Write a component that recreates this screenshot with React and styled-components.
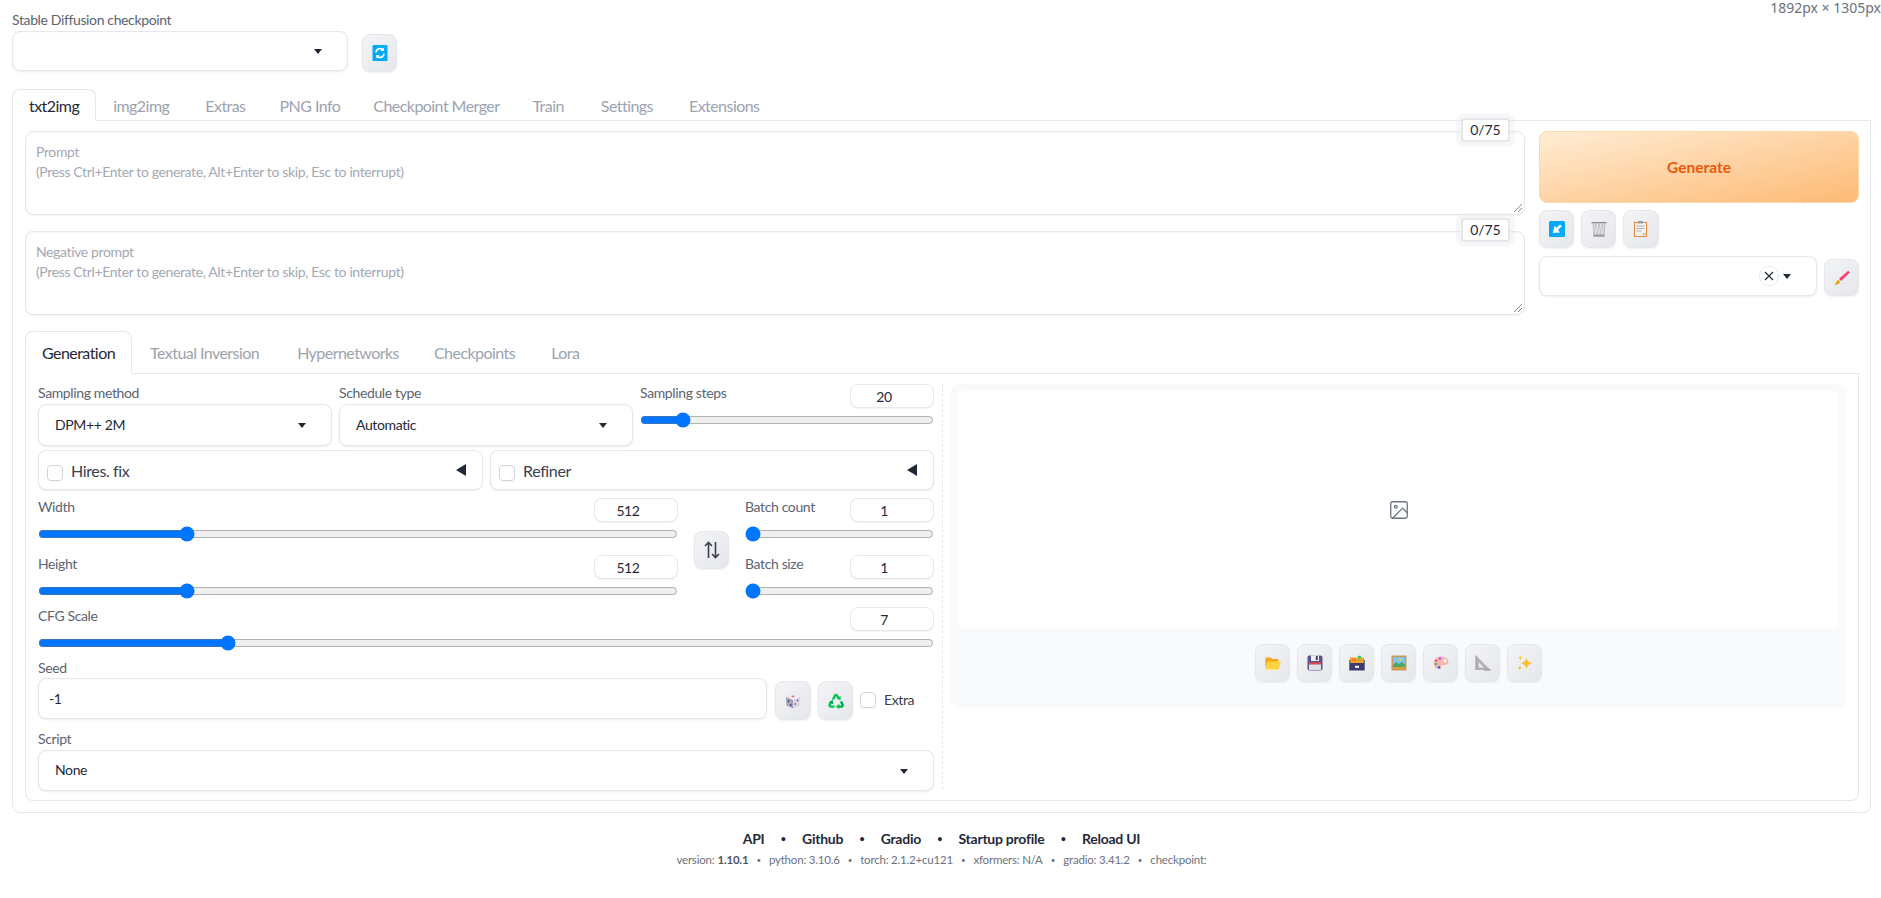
import React from "react";
import styled, { createGlobalStyle } from "styled-components";

const Global = createGlobalStyle`
  html, body { margin: 0; padding: 0; background: #fff; }
  body { font-family: Lato, "Noto Sans", sans-serif; font-size: 14px; color: #1f2937; letter-spacing: -0.37px; }
  * { box-sizing: border-box; }
`;

const Page = styled.div`
  position: relative;
  width: 1881px;
  padding: 10px 10px 0 12px;
`;
const SizeTip = styled.div`
  position: absolute; top: 0; right: 0; font-family: "Noto Sans", sans-serif;
  font-size: 14px; line-height: 16px; color: #6b7280; white-space: nowrap; letter-spacing: 0;
`;
const Label = styled.div`
  font-size: 14px; line-height: ${p => p.$lh || 20}px; height: ${p => p.$h || 21}px; color: #5b6472;
  margin-top: ${p => p.$mt || 0}px;
`;
const CheckpointRow = styled.div`display: flex; align-items: flex-start; gap: 14px;`;
const Select = styled.div`
  position: relative; display: flex; align-items: center; height: ${p => p.$h || 42}px; width: ${p => p.$w ? p.$w + "px" : "100%"};
  background: #fff; border: 1px solid #e5e7eb; border-radius: 8px; padding: 0 0 2px 16px;
  box-shadow: 0 1px 2px rgba(0,0,0,.08), inset 0 1px 2px rgba(0,0,0,.02);
  color: #1f2937; font-size: 14px;
`;
const Caret = styled.i`
  position: absolute; right: 25px; top: 50%; margin-top: -2px; width: 0; height: 0;
  border-left: 4px solid transparent; border-right: 4px solid transparent; border-top: 5px solid #1f2937;
`;
const ClearBtn = styled.span`
  position: absolute; right: 37px; top: 9px; width: 20px; height: 20px; border-radius: 50%;
  border: 1px solid #e5e7eb; display: flex; align-items: center; justify-content: center; background: #fff;
`;
const ToolBtn = styled.button`
  flex: none; display: flex; align-items: center; justify-content: center; padding: 0;
  width: ${p => p.$w || 35}px; height: ${p => p.$h || 38}px; margin-top: ${p => p.$mt || 0}px; margin-left: ${p => p.$ml || 0}px;
  border: 1px solid #e5e7eb; border-radius: 8px;
  background: linear-gradient(to bottom right, #f3f4f6, #e5e7eb);
  box-shadow: 0 1px 2px rgba(0,0,0,.06);
  align-self: ${p => p.$self || "auto"};
`;
const TabBar = styled.div`
  display: flex; height: ${p => p.$h}px; margin-top: ${p => p.$mt}px; border-bottom: 1px solid #e5e7eb;
  font-size: 16px; letter-spacing: -0.55px;
`;
const Tab = styled.div`
  height: ${p => p.$h}px; padding: 0 ${p => p.$pad}px; display: flex; align-items: center; white-space: nowrap;
  color: ${p => p.$active ? "#1f2937" : "#9ca3af"}; 
  border: 1px solid ${p => p.$active ? "#e5e7eb" : "transparent"};
  border-bottom: ${p => p.$active ? "1px solid #fff" : "none"};
  border-radius: 8px 8px 0 0; background: ${p => p.$active ? "#fff" : "transparent"};
  margin-right: ${p => p.$mr || 0}px;
`;
const MainPanel = styled.div`
  border: 1px solid #e5e7eb; border-top: none; border-radius: 0 0 8px 8px; padding: 10px 11px 10px 12px; height: 692px;
`;
const PromptGrid = styled.div`display: grid; grid-template-columns: 1500px 320px; column-gap: 14px;`;
const PromptCol = styled.div`display: flex; flex-direction: column; gap: 16px;`;
const PromptBox = styled.div`
  position: relative; height: 84px; padding: 10px 10px; border: 1px solid #e5e7eb; border-radius: 8px; background: #fff;
  box-shadow: inset 0 1px 2px rgba(0,0,0,.04), 0 1px 1px rgba(0,0,0,.04);
  color: #a3a9b4; font-size: 14px; line-height: 20px;
`;
const Counter = styled.div`
  position: absolute; top: -14px; right: 14px; width: 49px; height: 24px; background: #fff;
  border: 2px solid #e5e7eb; border-radius: 4px; box-shadow: 0 0 0 5px rgba(229,231,235,.35);
  display: flex; align-items: center; justify-content: center; color: #1f2937; font-size: 14px; letter-spacing: -0.1px;
`;
const Grip = styled.svg`position: absolute; right: 1px; bottom: 1px;`;
const SideCol = styled.div`display: flex; flex-direction: column;`;
const GenerateBtn = styled.button`
  height: 72px; width: 320px; border: 1px solid #fed7aa; border-radius: 8px; font: 700 15.5px Lato, sans-serif;
  color: #ea580c; background: linear-gradient(to bottom right, #ffedd5, #fdba74); letter-spacing: 0;
`;
const ToolRow = styled.div`display: flex; gap: 7px; margin-top: ${p => p.$mt || 0}px;`;
const SubPanel = styled.div`
  display: grid; grid-template-columns: 896px 912px; height: 427px;
  border: 1px solid #e5e7eb; border-top: none; border-radius: 0 0 8px 8px; padding: 10px 12px 0 12px;
`;
const LeftCol = styled.div`display: flex; flex-direction: column;`;
const RightCol = styled.div`
  margin: 0 0 0 8px; padding-left: 8px; border-left: 1px dashed #e5e7eb; height: 405px;
`;
const ThreeCols = styled.div`display: grid; grid-template-columns: 294px 294px 294px; column-gap: 7px;`;
const TwoCols = styled.div`display: grid; grid-template-columns: 445px 444px; column-gap: 7px; margin-top: 4px;`;
const Accordion = styled.div`
  position: relative; height: 40px; display: flex; align-items: center; padding-left: 8px;
  background: #fff; border: 1px solid #e5e7eb; border-radius: 8px; box-shadow: 0 1px 2px rgba(0,0,0,.08);
  font-size: 16px; color: #374151;
`;
const Check = styled.input.attrs({ type: "checkbox" })`
  appearance: none; flex: none; width: 16px; height: 16px; margin: ${p => p.$mt || 0}px 8px 0 0; background: #fff;
  border: 1px solid #d1d5db; border-radius: 4px; box-shadow: 0 1px 1px rgba(0,0,0,.04);
`;
const LeftTri = styled.i`
  position: absolute; right: 16px; top: 13px; width: 0; height: 0;
  border-top: 6px solid transparent; border-bottom: 6px solid transparent; border-right: 10px solid #1f2937;
`;
const SliderBlock = styled.div`height: 47px; margin-top: ${p => p.$mt || 0}px;`;
const SliderHead = styled.div`display: flex; justify-content: space-between; height: 24px;`;
const SliderLabel = styled.div`font-size: 14px; line-height: 18px; color: #5b6472;`;
const NumBox = styled.div`
  width: 84px; height: 24px; padding-right: 16px; display: flex; align-items: center; justify-content: center;
  background: #fff; border: 1px solid #e5e7eb; border-radius: 8px; font-size: 14px; color: #1f2937;
  box-shadow: 0 1px 1px rgba(0,0,0,.05);
`;
const Range = styled.input.attrs({ type: "range" })`
  display: block; width: 100%; height: 16px; margin: 4px 0 0; accent-color: #0075ff;
`;
const DimGrid = styled.div`
  display: grid; grid-template-columns: 640px 35px 189px; column-gap: 16px; margin-top: 8px;
`;
const SliderStack = styled.div`display: flex; flex-direction: column; gap: 10px;`;
const SeedRow = styled.div`display: flex; align-items: flex-start;`;
const SeedInput = styled.div`
  width: 729px; height: 41px; padding-left: 10px; display: flex; align-items: center; margin-right: 8px;
  background: #fff; border: 1px solid #e5e7eb; border-radius: 8px; font-size: 14px; color: #1f2937;
  box-shadow: 0 1px 2px rgba(0,0,0,.08), inset 0 1px 2px rgba(0,0,0,.03);
`;
const ExtraLabel = styled.label`display: flex; align-items: center; height: 41px; margin: 1px 0 0 7px; font-size: 14px; color: #374151;`;
const Gallery = styled.div`
  width: 895px; height: 324px; padding: 7px 7px 0; background: #f9fafb; border-radius: 8px;
`;
const ImageArea = styled.div`
  height: 237px; background: #fff; border-radius: 4px; display: flex; align-items: center; justify-content: center; color: #6b7280;
`;
const GalleryTools = styled.div`display: flex; justify-content: center; gap: 7px; margin-top: 16px;`;
const Footer = styled.div`
  padding: 16px 0 0 0; text-align: center;
`;
const Links = styled.div`
  display: flex; justify-content: center; align-items: center; font-size: 14px; font-weight: 700; line-height: 20px; color: #1f2937; letter-spacing: -0.25px;
`;
const LinkDot = styled.span`width: 37.5px; text-align: center; font-size: 9px;`;
const Versions = styled.div`
  display: flex; justify-content: center; align-items: center; font-size: 11.5px; line-height: 22px; color: #6b7280; letter-spacing: -0.2px;
  b { color: #4b5563; font-weight: 700; margin-left: 3px; }
`;
const VerDot = styled.span`width: 20.5px; text-align: center; font-size: 8px;`;

/* ---- emoji-like drawings ---- */
const Svg = ({ w = 16, h = 16, children }) => (
  <svg width={w} height={h} viewBox="0 0 16 16" fill="none" aria-hidden="true">{children}</svg>
);
const RefreshIcon = () => (
  <Svg>
    <rect x="0.5" y="0" width="15" height="16" rx="1" fill="#03a9f4" />
    <path d="M4 7.5a4 4 0 0 1 6.6-3" stroke="#fff" strokeWidth="1.7" />
    <path d="M12 8.5a4 4 0 0 1-6.6 3" stroke="#fff" strokeWidth="1.7" />
    <path d="M11.8 2.4v3.6H8.2zM4.2 13.6V10h3.6z" fill="#fff" />
  </Svg>
);
const ArrowInIcon = () => (
  <Svg>
    <rect width="16" height="16" rx="1.5" fill="#03a9f4" />
    <path d="M12.8 5.200 L11 3.400 L7.600 6.800 L5.600 4.800 L3.800 12 L11 11.400 L9 9z" fill="#fff" />
  </Svg>
);
const TrashIcon = () => (
  <Svg>
    <path d="M0.5 1h15v1.400h-15z" fill="#8a8a8a" />
    <path d="M1.500 2.400h13l-1 13.100h-11z" fill="#c4c4c4" />
    <path d="M3 3 5 14M6 3l2 11M9.500 3l2 11M13 3 10.500 14M10 3 7.500 14M6.500 3 4.500 14" stroke="#ececec" strokeWidth=".7" />
    <path d="M2.400 13.600h11.200l-.2 2.200H2.600z" fill="#a0a0a0" />
  </Svg>
);
const ClipIcon = () => (
  <Svg w={16} h={18}>
    <rect x="1.500" y="1.500" width="12" height="14" fill="#f3f4f6" stroke="#e08a3c" strokeWidth="1" />
    <rect x="5" y="0" width="5" height="2.500" fill="#9e9e9e" />
    <path d="M3.500 5h8M3.500 7.500h8M3.500 10h5" stroke="#a8a8a8" strokeWidth=".9" />
    <path d="M10 15.500l3.500-3.500H10z" fill="#e0b48c" />
  </Svg>
);
const BrushIcon = () => (
  <Svg>
    <path d="M14.200.8 15.800 2.400 7.200 11 5 8.800z" fill="#f43f6e" />
    <path d="M4.300 9.800 6.200 11.700C5.400 13.800 3 14.800.5 14.800 1.800 13.600 2.400 11 4.300 9.800z" fill="#f59e0b" />
  </Svg>
);
const FolderIcon = () => (
  <Svg>
    <path d="M.5 2.500h5.500l1.300 1.500h6.200v3H.5z" fill="#f6a623" />
    <path d="M.5 3v11L3 6.500h-1z" fill="#f6a623" />
    <path d="M3.200 6.500H16l-2.400 8H.8z" fill="#ffd23f" />
  </Svg>
);
const FloppyIcon = () => (
  <Svg>
    <rect x="0.500" y="0.500" width="15" height="15" rx="2" fill="#5b5391" />
    <rect x="4" y="0.500" width="8" height="5.500" fill="#efeff4" />
    <rect x="8.800" y="1.100" width="2" height="4" fill="#3f3a70" />
    <rect x="2" y="7.500" width="12" height="2" fill="#ef4444" />
    <rect x="2" y="9.500" width="12" height="5.500" fill="#dfe0e6" />
  </Svg>
);
const CardBoxIcon = () => (
  <Svg>
    <rect x="1" y="2.500" width="14" height="6" fill="#f6a623" />
    <rect x="9" y="0.800" width="3" height="2" fill="#22c55e" />
    <rect x="3" y="3.900" width="4" height="2" fill="#ef7a3c" />
    <rect x="9" y="3.800" width="3" height="1.500" fill="#7fb069" />
    <path d="M.3 5h1v3h13.400V5h1v10.500H.3z" fill="#3f3a70" />
    <rect x="6" y="10.800" width="4" height="2" fill="#fff" />
  </Svg>
);
const PictureIcon = () => (
  <Svg>
    <rect x=".5" y=".5" width="15" height="15" fill="#c9985a" />
    <rect x="2" y="2" width="12" height="12" fill="#7fc6ea" />
    <path d="M2 10l3-3 3 2 3-2 3 2.500V14H2z" fill="#4fa36b" />
    <path d="M2 12h12v2H2z" fill="#d8a13a" />
    <circle cx="9.300" cy="4.700" r="1.400" fill="#f7c948" />
  </Svg>
);
const PaletteIcon = () => (
  <Svg>
    <path d="M7.500 1.500C3.500 1.500.5 4.500.5 8.300c0 3.600 3 6.200 6 6.200 1.400 0 2-1 1.700-2-.4-1.400.3-2.600 1.700-2.400 2.400.3 5.600-.4 5.600-3.400C15.500 3.700 12 1.500 7.500 1.500z" fill="#f6b8ac" />
    <circle cx="12" cy="6" r="1.400" fill="#fff" />
    <circle cx="7" cy="3.500" r="1.200" fill="#a855f7" />
    <circle cx="3.300" cy="5.600" r="1.200" fill="#ec4899" />
    <circle cx="3" cy="9" r="1.200" fill="#22c55e" />
    <circle cx="6" cy="12.300" r="1.200" fill="#2563eb" />
  </Svg>
);
const RulerIcon = () => (
  <Svg>
    <path fillRule="evenodd" d="M1 .5 15.500 15H1zM3.600 7.200V12.400H8.800z" fill="#b3b3b3" />
    <path d="M1 .5 1 15" stroke="#9a9a9a" strokeWidth="1" />
    <path d="M15.500 15H9" stroke="#8f87b8" strokeWidth="1" />
  </Svg>
);
const SparkleIcon = () => (
  <Svg>
    <path d="M9.500 2.500C10.300 6.200 11.500 7.300 15.500 8.200 11.500 9.200 10.300 10.300 9.500 14 8.700 10.300 7.500 9.200 3.800 8.200 7.500 7.300 8.700 6.200 9.500 2.500z" fill="#fbbf24" />
    <path d="M3.300.5c.3 1.500.8 2 2.300 2.300-1.500.3-2 .8-2.300 2.300C3 3.600 2.500 3.100 1 2.800 2.500 2.500 3 2 3.300.5z" fill="#fbbf24" />
    <path d="M2.800 10.500c.3 1.500.8 2 2.300 2.300-1.500.3-2 .8-2.300 2.300-.3-1.500-.8-2-2.300-2.300 1.500-.3 2-.8 2.300-2.300z" fill="#fbbf24" />
  </Svg>
);
const DiceIcon = () => (
  <Svg>
    <path d="M8 .8 15 4 8 7 1 4z" fill="#efeaf3" />
    <path d="M1 4 8 7v8.500L1.500 12.500z" fill="#a79fb8" />
    <path d="M15 4 8 7v8.500l6.500-3z" fill="#d9d3e4" />
    <ellipse cx="8" cy="3.300" rx="1.500" ry=".9" fill="#f0657a" />
    <circle cx="3.500" cy="8" r=".9" fill="#4a4470" />
    <circle cx="5.800" cy="12" r=".9" fill="#4a4470" />
    <circle cx="12.500" cy="7.500" r=".8" fill="#4a4470" />
    <circle cx="10.300" cy="11" r=".8" fill="#4a4470" />
  </Svg>
);
const RecycleIcon = () => (
  <Svg>
    <path d="M5 6.500 7 2.500c.5-.9 1.500-.9 2 0l1.500 2.600" stroke="#00c853" strokeWidth="2.400" fill="none" />
    <path d="M12.700 2.900 12.500 7.500 8.600 5.300z" fill="#00c853" />
    <path d="M13 8.500l1.600 3.100c.4 1-.2 2-1.200 2H11" stroke="#00a651" strokeWidth="2.400" fill="none" />
    <path d="M11.300 10.900v5L7.600 13.400z" fill="#00c853" />
    <path d="M6.500 13.600H3c-1.200 0-1.900-1-1.300-2.100l1.400-2.500" stroke="#00c853" strokeWidth="2.400" fill="none" />
    <path d="M.7 9.200 4.800 6.800 5.200 11.200z" fill="#00a651" />
  </Svg>
);
const SwapIcon = () => (
  <svg width="16" height="18" viewBox="0 0 16 18" fill="none" stroke="#374151" strokeWidth="1.600" aria-hidden="true">
    <path d="M4.500 17V1.500M1 5l3.500-3.500L8 5M11.500 1v15.500M8 13l3.500 3.500L15 13" />
  </svg>
);
const ImageIcon = () => (
  <svg width="22" height="22" viewBox="0 0 24 24" fill="none" stroke="currentColor" strokeWidth="1.400" aria-hidden="true" strokeLinecap="round" strokeLinejoin="round">
    <rect x="3" y="3" width="18" height="18" rx="2" />
    <circle cx="8.500" cy="8.500" r="1.500" />
    <path d="M21 15l-5-5L5 21" />
  </svg>
);
const CloseIcon = () => (
  <svg width="10" height="10" viewBox="0 0 10 10" stroke="#1f2937" strokeWidth="1.200" aria-hidden="true"><path d="M1 1l8 8M9 1L1 9" /></svg>
);
const GripIcon = () => (
  <Grip width="10" height="10" viewBox="0 0 10 10" stroke="#888" strokeWidth="1" aria-hidden="true"><path d="M1 9 9 1M5 9 9 5" /></Grip>
);

const Slider = ({ label, value, min, max, mt }) => (
  <SliderBlock $mt={mt}>
    <SliderHead>
      <SliderLabel>{label}</SliderLabel>
      <NumBox>{value}</NumBox>
    </SliderHead>
    <Range min={min} max={max} defaultValue={value} />
  </SliderBlock>
);

const Prompt = ({ label }) => (
  <PromptBox>
    {label}
    <br />
    (Press Ctrl+Enter to generate, Alt+Enter to skip, Esc to interrupt)
    <Counter>0/75</Counter>
    <GripIcon />
  </PromptBox>
);

const topTabs = [["img2img", 2], ["Extras", 0], ["PNG Info", -1], ["Checkpoint Merger", -1], ["Train", 3], ["Settings", 2], ["Extensions", 0]];
const subTabs = [["Textual Inversion", 6], ["Hypernetworks", 3], ["Checkpoints", 4], ["Lora", 0]];
const galleryIcons = [FolderIcon, FloppyIcon, CardBoxIcon, PictureIcon, PaletteIcon, RulerIcon, SparkleIcon];
const links = ["API", "Github", "Gradio", "Startup profile", "Reload UI"];
const versions = ["python: 3.10.6", "torch: 2.1.2+cu121", "xformers: N/A", "gradio: 3.41.2", "checkpoint:"];

export default function App() {
  return (
    <Page>
      <Global />
      <SizeTip>1892px × 1305px</SizeTip>
      <Label>Stable Diffusion checkpoint</Label>
      <CheckpointRow>
        <Select $w={336} $h={40}><Caret /></Select>
        <ToolBtn $mt={3}><RefreshIcon /></ToolBtn>
      </CheckpointRow>

      <TabBar $h={32} $mt={17}>
        <Tab $active $h={32} $pad={16}>txt2img</Tab>
        {topTabs.map(([t, mr]) => <Tab key={t} $h={31} $pad={16} $mr={mr}>{t}</Tab>)}
      </TabBar>
      <MainPanel>
        <PromptGrid>
          <PromptCol>
            <Prompt label="Prompt" />
            <Prompt label="Negative prompt" />
          </PromptCol>
          <SideCol>
            <GenerateBtn>Generate</GenerateBtn>
            <ToolRow $mt={7}>
              <ToolBtn><ArrowInIcon /></ToolBtn>
              <ToolBtn><TrashIcon /></ToolBtn>
              <ToolBtn $w={36}><ClipIcon /></ToolBtn>
            </ToolRow>
            <ToolRow $mt={8}>
              <Select $w={278} $h={40}><ClearBtn><CloseIcon /></ClearBtn><Caret /></Select>
              <ToolBtn $mt={3} $h={37}><BrushIcon /></ToolBtn>
            </ToolRow>
          </SideCol>
        </PromptGrid>

        <TabBar $h={43} $mt={16}>
          <Tab $active $h={43} $pad={16} $mr={2}>Generation</Tab>
          {subTabs.map(([t, mr]) => <Tab key={t} $h={42} $pad={15} $mr={mr}>{t}</Tab>)}
        </TabBar>
        <SubPanel>
          <LeftCol>
            <ThreeCols>
              <div>
                <Label $h={20} $lh={18}>Sampling method</Label>
                <Select>DPM++ 2M<Caret /></Select>
              </div>
              <div>
                <Label $h={20} $lh={18}>Schedule type</Label>
                <Select>Automatic<Caret /></Select>
              </div>
              <Slider label="Sampling steps" value={20} min={1} max={150} />
            </ThreeCols>
            <TwoCols>
              <Accordion><Check $mt={6} />Hires. fix<LeftTri /></Accordion>
              <Accordion><Check $mt={6} />Refiner<LeftTri /></Accordion>
            </TwoCols>
            <DimGrid>
              <SliderStack>
                <Slider label="Width" value={512} min={64} max={2048} />
                <Slider label="Height" value={512} min={64} max={2048} />
              </SliderStack>
              <ToolBtn $self="center"><SwapIcon /></ToolBtn>
              <SliderStack>
                <Slider label="Batch count" value={1} min={1} max={100} />
                <Slider label="Batch size" value={1} min={1} max={8} />
              </SliderStack>
            </DimGrid>
            <Slider label="CFG Scale" value={7} min={1} max={30} mt={5} />
            <Label $h={20} $mt={4}>Seed</Label>
            <SeedRow>
              <SeedInput>-1</SeedInput>
              <ToolBtn $w={36} $h={39} $mt={3}><DiceIcon /></ToolBtn>
              <ToolBtn $h={39} $mt={3} $ml={7}><RecycleIcon /></ToolBtn>
              <ExtraLabel><Check />Extra</ExtraLabel>
            </SeedRow>
            <Label $mt={9}>Script</Label>
            <Select $h={41}>None<Caret /></Select>
          </LeftCol>
          <RightCol>
            <Gallery>
              <ImageArea><ImageIcon /></ImageArea>
              <GalleryTools>
                {galleryIcons.map((I, i) => <ToolBtn key={i}><I /></ToolBtn>)}
              </GalleryTools>
            </Gallery>
          </RightCol>
        </SubPanel>
      </MainPanel>

      <Footer>
        <Links>
          {links.map((l, i) => (
            <React.Fragment key={l}>
              {i > 0 && <LinkDot>•</LinkDot>}
              <span>{l}</span>
            </React.Fragment>
          ))}
        </Links>
        <Versions>
          <span>version:<b>1.10.1</b></span>
          {versions.map(v => (
            <React.Fragment key={v}>
              <VerDot>•</VerDot>
              <span>{v}</span>
            </React.Fragment>
          ))}
        </Versions>
      </Footer>
    </Page>
  );
}
